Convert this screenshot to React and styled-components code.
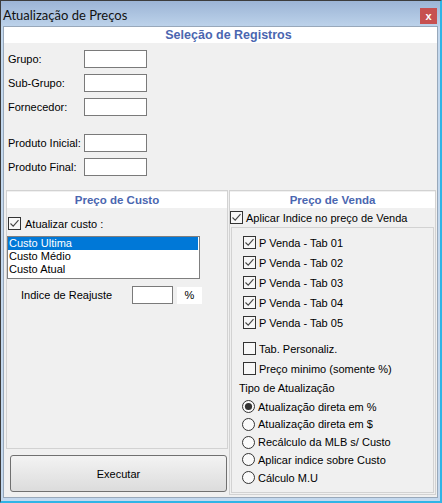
import React from 'react';
import styled, { createGlobalStyle } from 'styled-components';

const GlobalStyle = createGlobalStyle`
  html, body {
    margin: 0;
    padding: 0;
    background: #ffffff;
  }
  body {
    font-family: "Liberation Sans", Arial, sans-serif;
    font-size: 11px;
    color: #000;
  }
  * { box-sizing: border-box; }
`;

const Window = styled.div`
  width: 442px;
  height: 503px;
  display: flex;
  flex-direction: column;
  border-top: 1px solid #3c3c3c;
  border-left: 1px solid #3c3c3c;
  border-right: 2px solid #2fb4e6;
  border-bottom: 2px solid #2fb4e6;
  background: linear-gradient(#9cb4d5 0px, #bcd2ea 25px, #c3d8ee 26px);
`;

const TitleBar = styled.div`
  height: 25px;
  flex: none;
  display: flex;
  align-items: center;
  justify-content: space-between;
  padding: 0 3px 0 2px;
`;

const Title = styled.span`
  font-family: "Lato", "Liberation Sans", sans-serif;
  font-size: 13px;
  color: #111;
  margin-top: 2px;
`;

const CloseButton = styled.div`
  width: 17px;
  height: 16px;
  margin-top: 5px;
  background: #c75050;
  color: #fff;
  font-weight: bold;
  font-size: 11px;
  display: flex;
  align-items: center;
  justify-content: center;
`;

const Client = styled.div`
  flex: 1;
  margin: 0 2px 3px 2px;
  border: 1px solid #98a8ba;
  background: #f0f0f0;
  display: flex;
  flex-direction: column;
`;

const Banner = styled.div`
  height: ${p => p.$h || 16}px;
  flex: none;
  padding-left: ${p => p.$shift || 0}px;
  background: #ffffff;
  color: #4a66b0;
  font-weight: bold;
  font-size: ${p => p.$size || 11.5}px;
  display: flex;
  align-items: center;
  justify-content: center;
`;

const Filters = styled.div`
  display: flex;
  flex-direction: column;
  gap: 6px;
  padding: 7px 0 0 4px;
`;

const Field = styled.div`
  display: flex;
  align-items: center;
  height: 18px;
  margin-top: ${p => p.$gapTop || 0}px;
`;

const FieldLabel = styled.span`
  width: ${p => p.$w || 76}px;
  flex: none;
`;

const TextBox = styled.div`
  width: ${p => p.$w || 63}px;
  height: 18px;
  flex: none;
  background: #fff;
  border: 1px solid #7a7a7a;
`;

const Panels = styled.div`
  display: flex;
  gap: 1px;
  margin: 14px 0 0 2px;
`;

const LeftColumn = styled.div`
  width: 222px;
  display: flex;
  flex-direction: column;
`;

const Group = styled.div`
  height: ${p => p.$h}px;
  width: ${p => p.$w || 'auto'};
  border: 1px solid #d2d2d2;
  padding-top: 1px;
  display: flex;
  flex-direction: column;
`;

const InnerGroup = styled.div`
  flex: 1;
  margin: 3px 1px 1px 1px;
  border: 1px solid #d2d2d2;
  padding: 8px 0 0 11px;
  display: flex;
  flex-direction: column;
`;

const CheckRow = styled.label`
  display: flex;
  align-items: center;
  gap: ${p => p.$gap || 3}px;
  height: 13px;
  margin-top: ${p => p.$top || 0}px;
  margin-left: ${p => p.$left || 0}px;
  white-space: nowrap;
`;

const Box = styled.svg`
  width: 13px;
  height: 13px;
  flex: none;
  display: block;
`;

const Check = ({ checked }) => (
  <Box viewBox="0 0 13 13">
    <rect x="0.5" y="0.5" width="12" height="12" fill="#f7f7f7" stroke="#333" />
    {checked && <path d="M2.5 6.5 L5.2 9.2 L10.5 3.2" fill="none" stroke="#444" strokeWidth="1.1" />}
  </Box>
);

const Radio = ({ checked }) => (
  <Box viewBox="0 0 13 13">
    <circle cx="6.5" cy="6.5" r="6" fill="#fafafa" stroke="#333" />
    {checked && <circle cx="6.5" cy="6.5" r="3.6" fill="#333" />}
  </Box>
);

const ListBox = styled.div`
  width: 193px;
  height: 43px;
  margin-top: 6px;
  background: #fff;
  border: 1px solid #7f7f7f;
  display: flex;
  flex-direction: column;
`;

const ListItem = styled.div`
  height: 13px;
  line-height: 13px;
  padding-left: 1px;
  margin-right: 1px;
  background: ${p => (p.$selected ? '#0078d7' : 'transparent')};
  color: ${p => (p.$selected ? '#fff' : '#000')};
`;

const IndexRow = styled.div`
  display: flex;
  align-items: center;
  margin: 7px 0 0 14px;
  height: 18px;
`;

const Unit = styled.div`
  width: 25px;
  height: 17px;
  margin-left: 4px;
  background: #fff;
  display: flex;
  align-items: center;
  justify-content: center;
`;

const ExecButton = styled.div`
  width: 217px;
  height: 37px;
  margin: 6px 0 0 4px;
  border: 1px solid #707070;
  border-radius: 3px;
  background: linear-gradient(#f3f3f3, #dcdcdc);
  display: flex;
  align-items: center;
  justify-content: center;
`;

const CheckList = styled.div`
  display: flex;
  flex-direction: column;
  gap: 7px;
  margin-top: ${p => p.$top || 0}px;
`;

const SectionText = styled.div`
  margin: 6px 0 0 -4px;
  height: 14px;
  line-height: 14px;
`;

const RadioList = styled.div`
  display: flex;
  flex-direction: column;
  gap: 4.75px;
  margin: 5px 0 0 -1px;
`;

const tabs = ['01', '02', '03', '04', '05'];
const modes = [
  'Atualização direta em %',
  'Atualização direta em $',
  'Recálculo da MLB s/ Custo',
  'Aplicar indice sobre Custo',
  'Cálculo M.U',
];

export default function App() {
  return (
    <>
      <GlobalStyle />
      <Window>
        <TitleBar>
          <Title>Atualização de Preços</Title>
          <CloseButton>x</CloseButton>
        </TitleBar>
        <Client>
          <Banner $size={12.5} $shift={16}>Seleção de Registros</Banner>
          <Filters>
            <Field><FieldLabel>Grupo:</FieldLabel><TextBox /></Field>
            <Field><FieldLabel>Sub-Grupo:</FieldLabel><TextBox /></Field>
            <Field><FieldLabel>Fornecedor:</FieldLabel><TextBox /></Field>
            <Field $gapTop={12}><FieldLabel>Produto Inicial:</FieldLabel><TextBox /></Field>
            <Field><FieldLabel>Produto Final:</FieldLabel><TextBox /></Field>
          </Filters>
          <Panels>
            <LeftColumn>
              <Group $h={259}>
                <Banner>Preço de Custo</Banner>
                <CheckRow $top={9} $left={1} $gap={4}>
                  <Check checked />
                  Atualizar custo :
                </CheckRow>
                <ListBox>
                  <ListItem $selected>Custo Ultima</ListItem>
                  <ListItem>Custo Médio</ListItem>
                  <ListItem>Custo Atual</ListItem>
                </ListBox>
                <IndexRow>
                  <FieldLabel $w={111}>Indice de Reajuste</FieldLabel>
                  <TextBox $w={41} />
                  <Unit>%</Unit>
                </IndexRow>
              </Group>
              <ExecButton>Executar</ExecButton>
            </LeftColumn>
            <Group $h={305} $w="207px">
              <Banner>Preço de Venda</Banner>
              <CheckRow $top={3}>
                <Check checked />
                Aplicar Indice no preço de Venda
              </CheckRow>
              <InnerGroup>
                <CheckList>
                  {tabs.map(t => (
                    <CheckRow key={t}>
                      <Check checked />
                      P Venda - Tab {t}
                    </CheckRow>
                  ))}
                </CheckList>
                <CheckList $top={13}>
                  <CheckRow><Check />Tab. Personaliz.</CheckRow>
                  <CheckRow><Check />Preço minimo (somente %)</CheckRow>
                </CheckList>
                <SectionText>Tipo de Atualização</SectionText>
                <RadioList>
                  {modes.map((m, i) => (
                    <CheckRow key={m}>
                      <Radio checked={i === 0} />
                      {m}
                    </CheckRow>
                  ))}
                </RadioList>
              </InnerGroup>
            </Group>
          </Panels>
        </Client>
      </Window>
    </>
  );
}
